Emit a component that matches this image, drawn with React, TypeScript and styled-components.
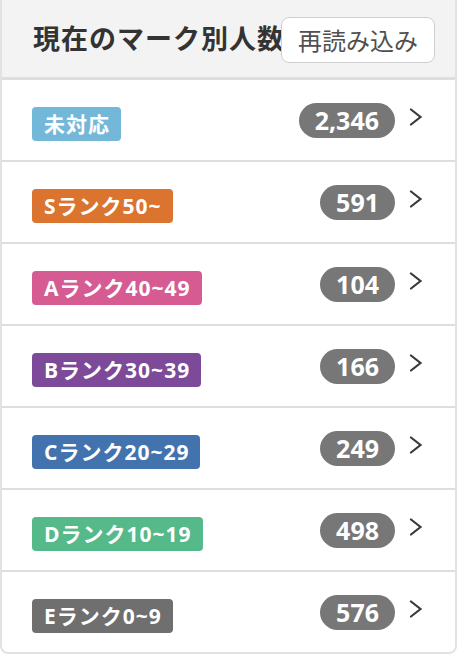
import React from "react";
import styled, { createGlobalStyle } from "styled-components";

const GlobalStyle = createGlobalStyle`
  html, body { margin: 0; padding: 0; background: #ffffff; }
  body { font-family: "Open Sans", "Noto Sans CJK JP", sans-serif; }
  * { box-sizing: border-box; }
`;

const Card = styled.section`
  width: 457px;
  border: 2px solid #e2e2e2;
  border-top: none;
  border-radius: 0 0 8px 8px;
  overflow: hidden;
  background: #ffffff;
`;

const Header = styled.header`
  height: 80px;
  display: flex;
  align-items: center;
  padding: 0 20px 0 31px;
  background: #f3f3f3;
  border-bottom: 3px solid #dedede;
`;

const Title = styled.h2`
  flex: 1;
  min-width: 0;
  margin: 0;
  overflow: hidden;
  white-space: nowrap;
  font-family: "Noto Sans CJK JP", sans-serif;
  font-size: 27px;
  font-weight: 700;
  letter-spacing: 1px;
  color: #333333;
  line-height: 1.2;
`;

const ReloadButton = styled.button`
  flex-shrink: 0;
  height: 46px;
  width: 154px;
  margin-top: 2px;
  padding: 0;
  background: #ffffff;
  border: 1.5px solid #cfcfcf;
  border-radius: 8px;
  font-family: "Noto Sans CJK JP", sans-serif;
  font-size: 24px;
  font-weight: 400;
  color: #505050;
  cursor: pointer;
`;

const List = styled.ul`
  list-style: none;
  margin: 0;
  padding: 0;
`;

const Row = styled.li`
  height: 82px;
  display: flex;
  align-items: center;
  padding: 0 32px 0 30px;
  border-bottom: 2px solid #dedede;
  &:last-child { border-bottom: none; height: 80px; }
`;

const Badge = styled.span<{ $color: string }>`
  display: inline-flex;
  align-items: center;
  height: 34px;
  margin-top: 8px;
  padding: 0 11px 0 12px;
  border-radius: 4px;
  background: ${(p) => p.$color};
  color: #ffffff;
  font-family: "Open Sans", "Noto Sans CJK JP", sans-serif;
  font-size: 21px;
  font-weight: 700;
  letter-spacing: 1px;
  line-height: 1;
`;

const Spacer = styled.div`
  flex: 1;
`;

const Count = styled.span`
  display: inline-flex;
  align-items: center;
  height: 35px;
  padding: 0 16px;
  border-radius: 18px;
  background: #777777;
  color: #ffffff;
  font-family: "Open Sans", sans-serif;
  font-size: 25px;
  font-weight: 700;
  line-height: 1;
`;

const Chevron = styled.svg`
  width: 14px;
  height: 18px;
  margin-left: 14px;
  margin-top: -6px;
  flex-shrink: 0;
`;

const rows = [
  { label: "未対応", color: "#74b8d9", count: "2,346" },
  { label: "Sランク50~", color: "#db742e", count: "591" },
  { label: "Aランク40~49", color: "#d65b93", count: "104" },
  { label: "Bランク30~39", color: "#7c4a98", count: "166" },
  { label: "Cランク20~29", color: "#4373ae", count: "249" },
  { label: "Dランク10~19", color: "#56b989", count: "498" },
  { label: "Eランク0~9", color: "#6f6f6f", count: "576" },
];

export default function App() {
  return (
    <>
      <GlobalStyle />
      <Card>
        <Header>
          <Title>現在のマーク別人数</Title>
          <ReloadButton>再読み込み</ReloadButton>
        </Header>
        <List>
          {rows.map((r) => (
            <Row key={r.label}>
              <Badge $color={r.color}>{r.label}</Badge>
              <Spacer />
              <Count>{r.count}</Count>
              <Chevron viewBox="0 0 14 18">
                <polyline
                  points="2,1.5 11.5,9 2,16.5"
                  fill="none"
                  stroke="#3a3a3a"
                  strokeWidth="2.2"
                  strokeLinecap="round"
                  strokeLinejoin="miter"
                />
              </Chevron>
            </Row>
          ))}
        </List>
      </Card>
    </>
  );
}
